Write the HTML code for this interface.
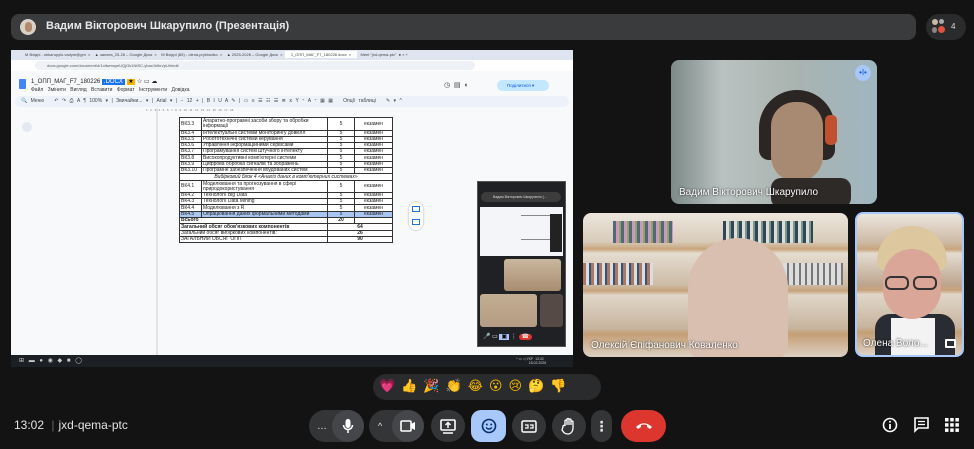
<!DOCTYPE html>
<html><head><meta charset="utf-8"><style>
*{margin:0;padding:0;box-sizing:border-box}
body{width:974px;height:449px;background:#131314;font-family:"Liberation Sans","DejaVu Sans",sans-serif;position:relative;overflow:hidden;color:#e3e3e3}
.abs{position:absolute}
.topbar{left:11px;top:14px;width:905px;height:26px;background:#3a3b3d;border-radius:8px}
.screen{left:11px;top:50px;width:562px;height:317px;background:#f8f9fb;overflow:hidden}
table{border-collapse:collapse;position:absolute;left:168px;top:67px;font-size:5px;color:#222;background:#fff}
td{border:0.8px solid #333;padding:0 1px;line-height:5px;white-space:nowrap;overflow:hidden}
.btn{position:absolute;top:410px;height:32px;background:#333537;border-radius:16px;display:flex;align-items:center;justify-content:center}
.tile{position:absolute;border-radius:8px;overflow:hidden}
.name{position:absolute;left:8px;bottom:6px;color:#fff;font-size:10px;text-shadow:0 0 2px #000}
</style></head><body>

<div class="abs topbar"></div>
<div class="abs" style="left:20px;top:19px;width:16px;height:16px;border-radius:50%;background:#d9d0c6"><div style="margin:3px auto 0;width:7px;height:10px;border-radius:4px;background:#b08a6a"></div></div>
<div class="abs" style="left:46px;top:20px;font-size:11px;font-weight:bold;color:#e8e8e8">Вадим Вікторович Шкарупило (Презентація)</div>
<div class="abs" style="left:926px;top:14px;width:40px;height:26px;background:#2a2b2d;border-radius:13px"></div>
<div class="abs" style="left:932px;top:19px;width:6px;height:6px;border-radius:50%;background:#c9b9a6"></div>
<div class="abs" style="left:939px;top:19px;width:5px;height:5px;border-radius:50%;background:#aaa"></div>
<div class="abs" style="left:932px;top:27px;width:5px;height:6px;border-radius:50%;background:#888"></div>
<div class="abs" style="left:938px;top:26px;width:7px;height:7px;border-radius:50%;background:#e0533c"></div>
<div class="abs" style="left:951px;top:22px;font-size:8px;color:#ddd">4</div>

<!-- shared screen -->
<div class="abs screen">
  <div class="abs" style="left:0;top:0;width:562px;height:10px;background:#dfe5f0"></div>
  <div class="abs" style="left:14px;top:2px;font-size:4px;color:#444;white-space:nowrap">M Вхідні - shkarupylo.vadym@gm &nbsp;×&nbsp; &nbsp; ▲ заочна_25-26 – Google Диск &nbsp;×&nbsp; &nbsp; M Вхідні (85) - olena.prykhodko &nbsp;×&nbsp; &nbsp; ▲ 2025-2026 – Google Диск &nbsp;×&nbsp; <span style="background:#fff;padding:1px 6px">1_ОПП_МАГ_F7_180226.docx &nbsp;×</span> &nbsp; Meet "jxd-qema-ptc" &nbsp;● × +</div>
  <div class="abs" style="left:0;top:10px;width:562px;height:11px;background:#fff"></div>
  <div class="abs" style="left:24px;top:11px;width:440px;height:9px;background:#eef1f6;border-radius:5px"></div>
  <div class="abs" style="left:36px;top:13px;font-size:4px;color:#555">docs.google.com/document/d/1oliwmuyeUQjGk1NtSC-ybac1hfkn/pUlr/edit</div>
  <div class="abs" style="left:8px;top:29px;width:7px;height:10px;background:#4285f4;border-radius:1px"></div>
  <div class="abs" style="left:20px;top:28px;font-size:6px;color:#222">1_ОПП_МАГ_F7_180226 <span style="background:#1a73e8;color:#fff;padding:0 2px">.DOCX</span> <span style="background:#f4b400;color:#000">&nbsp;★&nbsp;</span> ☆ ▭ ☁</div>
  <div class="abs" style="left:20px;top:37px;font-size:5px;color:#333;word-spacing:3px">Файл Змінити Вигляд Вставити Формат Інструменти Довідка</div>
  <div class="abs" style="left:486px;top:30px;width:52px;height:11px;background:#c2e7ff;border-radius:6px;font-size:4.5px;color:#0b57d0;padding:3px 0 0 10px">Поділитися ▾</div>
  <div class="abs" style="left:433px;top:31px;font-size:7px;color:#444">◷ &nbsp;▤ &nbsp;◐</div>
  <div class="abs" style="left:4px;top:46px;width:554px;height:11px;background:#edf2fa;border-radius:6px"></div>
  <div class="abs" style="left:10px;top:48px;font-size:5px;color:#444;white-space:nowrap;word-spacing:2px">🔍 Меню &nbsp; ↶ ↷ ⎙ A ¶ 100% ▾ | Звичайни... ▾ | Arial ▾ | − 12 + | B I U A ✎ | ▭ ≡ ☰ ☷ ☰ ≣ ⅹ Y ⁃ A ⁃ ▦ ▦ &nbsp; Опції таблиці &nbsp; ✎ ▾ ^</div>
  <div class="abs" style="left:145px;top:58px;width:2px;height:255px;background:#e3e3e3"></div>
  <div class="abs" style="left:11px;top:72px;width:10px;height:10px;border-radius:50%;background:#e3e8f2"></div>
  <div class="abs" style="left:135px;top:58px;width:260px;height:5px;font-size:3px;color:#777">1 . 2 . 3 . 4 . 5 . 6 . 7 . 8 . 9 . 10 . 11 . 12 . 13 . 14 . 15 . 16 . 17 . 18</div>
  <div class="abs" style="left:398px;top:152px;width:14px;height:28px;background:#fff;border-radius:7px;box-shadow:0 0 2px #aaa"></div>
  <div class="abs" style="left:401px;top:156px;width:8px;height:6px;border:1px solid #1a73e8"></div>
  <div class="abs" style="left:401px;top:169px;width:8px;height:6px;border:1px solid #1a73e8"></div>
  <!-- mini meet -->
  <div class="abs" style="left:466px;top:131px;width:89px;height:166px;background:#202124;border:1px solid #555"></div>
  <div class="abs" style="left:470px;top:142px;width:80px;height:10px;background:#3c3c3c;border-radius:5px;font-size:3.5px;color:#ddd;padding:3px 0 0 12px">Вадим Вікторович Шкарупило (...</div>
  <div class="abs" style="left:469px;top:157px;width:83px;height:49px;background:#f4f5f8"></div>
  <div class="abs" style="left:510px;top:165px;width:30px;height:25px;border:1px solid #888;border-width:1px 0"></div>
  <div class="abs" style="left:539px;top:164px;width:12px;height:38px;background:#222"></div>
  <div class="abs" style="left:493px;top:209px;width:57px;height:32px;background:linear-gradient(#c9b79f,#a88d70);border-radius:3px"></div>
  <div class="abs" style="left:469px;top:244px;width:57px;height:33px;background:linear-gradient(#c2ad92,#b59b84);border-radius:3px"></div>
  <div class="abs" style="left:529px;top:244px;width:23px;height:33px;background:#554a45;border-radius:3px"></div>
  <div class="abs" style="left:472px;top:283px;width:80px;height:12px;font-size:6px;color:#eee;white-space:nowrap">🎤 ▭ <span style="background:#a8c7fa;color:#000;padding:0 2px">▣</span> ⋮ <span style="background:#dc362e;padding:0 3px;border-radius:4px">☎</span></div>
  <!-- taskbar -->
  <div class="abs" style="left:0;top:305px;width:562px;height:12px;background:#1c1f24"></div>
  <div class="abs" style="left:8px;top:307px;font-size:6px;color:#ccc;word-spacing:3px">⊞ ▬ ● ◉ ◆ ■ ◯</div>
  <div class="abs" style="left:505px;top:307px;font-size:3.5px;color:#ccc">^ ▭ ◁ УКР &nbsp;13:02<br>&nbsp; &nbsp; &nbsp; &nbsp; &nbsp; &nbsp; &nbsp;18.02.2026</div>
  <table>
   <tr style="height:13px"><td style="width:22px">ВК3.3</td><td style="width:126px;white-space:normal">Апаратно-програмні засоби збору та обробки інформації</td><td style="width:27px;text-align:center">5</td><td style="width:38px;text-align:center">екзамен</td></tr>
   <tr style="height:6px"><td>ВК3.4</td><td>Інтелектуальні системи моніторингу довкілл</td><td align=center>5</td><td align=center>екзамен</td></tr>
   <tr style="height:6px"><td>ВК3.5</td><td>Робототехнічні системи керування</td><td align=center>5</td><td align=center>екзамен</td></tr>
   <tr style="height:6px"><td>ВК3.6</td><td>Управління інформаційними сервісами</td><td align=center>5</td><td align=center>екзамен</td></tr>
   <tr style="height:6px"><td>ВК3.7</td><td>Програмування систем штучного інтелекту</td><td align=center>5</td><td align=center>екзамен</td></tr>
   <tr style="height:7px"><td>ВК3.8</td><td>Високопродуктивні комп'ютерні системи</td><td align=center>5</td><td align=center>екзамен</td></tr>
   <tr style="height:6px"><td>ВК3.9</td><td>Цифрова обробка сигналів та зображень</td><td align=center>5</td><td align=center>екзамен</td></tr>
   <tr style="height:6px"><td>ВК3.10</td><td>Програмне забезпечення вбудованих систем</td><td align=center>5</td><td align=center>екзамен</td></tr>
   <tr style="height:7px"><td colspan=4 style="text-align:center;font-style:italic">Вибірковий блок 4 «Аналіз даних в комп'ютерних системах»</td></tr>
   <tr style="height:12px"><td>ВК4.1</td><td style="white-space:normal">Моделювання та прогнозування в сфері природокористування</td><td align=center>5</td><td align=center>екзамен</td></tr>
   <tr style="height:6px"><td>ВК4.2</td><td>Технології Big Data</td><td align=center>5</td><td align=center>екзамен</td></tr>
   <tr style="height:6px"><td>ВК4.3</td><td>Технології Data Mining</td><td align=center>5</td><td align=center>екзамен</td></tr>
   <tr style="height:7px"><td>ВК4.4</td><td>Моделювання з R</td><td align=center>5</td><td align=center>екзамен</td></tr>
   <tr style="height:6px;background:#a9c6f0"><td>ВК4.5</td><td>Опрацювання даних формальними методами</td><td align=center>5</td><td align=center>екзамен</td></tr>
   <tr style="height:6px"><td colspan=2><b>Всього</b></td><td align=center><b>20</b></td><td></td></tr>
   <tr style="height:7px"><td colspan=2><b>Загальний обсяг обов'язкових компонентів</b></td><td colspan=2 align=center><b>64</b></td></tr>
   <tr style="height:6px"><td colspan=2>Загальний обсяг вибіркових компонентів:</td><td colspan=2 align=center><b>26</b></td></tr>
   <tr style="height:6px"><td colspan=2>ЗАГАЛЬНИЙ ОБСЯГ ОПП</td><td colspan=2 align=center><b>90</b></td></tr>
  </table>
</div>

<!-- tiles -->
<div class="tile" style="left:671px;top:60px;width:206px;height:144px;background:linear-gradient(90deg,#7d8a88 0%,#b9c2c0 25%,#a9b3b0 60%,#9fb6c0 100%)">
  <div class="abs" style="left:88px;top:30px;width:76px;height:70px;border-radius:38px 38px 10px 10px;background:#2b2624"></div>
  <div class="abs" style="left:100px;top:42px;width:52px;height:80px;border-radius:24px 24px 26px 26px;background:#a88a72"></div>
  <div class="abs" style="left:154px;top:55px;width:12px;height:30px;border-radius:5px;background:#c0502f"></div>
  <div class="abs" style="left:100px;top:118px;width:80px;height:30px;background:#2e2a28;border-radius:10px"></div>
  <div class="abs" style="right:6px;top:5px;width:16px;height:16px;border-radius:50%;background:#a8c7fa;font-size:8px;color:#0b57d0;text-align:center;line-height:16px">•ǀ•</div>
  <div class="name">Вадим Вікторович Шкарупило</div>
</div>
<div class="tile" style="left:583px;top:213px;width:265px;height:144px;background:linear-gradient(#ece6dd 0%,#d8cbb9 20%,#c8a57c 25%,#e4dcd0 28%,#cdbba5 50%,#c6a27a 54%,#e0d6c8 57%,#c7b59e 80%,#c49f76 84%,#dbd0c2 100%)">
  <div class="abs" style="left:30px;top:8px;width:60px;height:22px;background:repeating-linear-gradient(90deg,#567 0 3px,#c9b 3px 6px,#8a6 6px 8px)"></div>
  <div class="abs" style="left:140px;top:8px;width:90px;height:22px;background:repeating-linear-gradient(90deg,#345 0 3px,#ddd 3px 6px,#798 6px 8px)"></div>
  <div class="abs" style="left:0;top:50px;width:70px;height:22px;background:repeating-linear-gradient(90deg,#a76 0 3px,#ddd 3px 6px,#357 6px 8px)"></div>
  <div class="abs" style="left:200px;top:50px;width:60px;height:22px;background:repeating-linear-gradient(90deg,#ddd 0 4px,#777 4px 6px)"></div>
  <div class="abs" style="left:105px;top:25px;width:100px;height:125px;border-radius:50px 50px 20px 20px;background:#d9bfb0"></div>
  <div class="name">Олексій Єпіфанович Коваленко</div>
</div>
<div class="tile" style="left:855px;top:212px;width:109px;height:145px;border:2px solid #a8c7fa;background:linear-gradient(#ece6dd 0%,#cdb9a4 20%,#c8a57c 25%,#e4dcd0 28%,#bda58f 50%,#c6a27a 54%,#e0d6c8 57%,#c7b59e 80%,#c49f76 84%,#dbd0c2 100%)">
  <div class="abs" style="left:18px;top:100px;width:80px;height:45px;background:#2a2c33;border-radius:15px 15px 0 0"></div>
  <div class="abs" style="left:34px;top:104px;width:44px;height:40px;background:#f3f3f3"></div>
  <div class="abs" style="left:20px;top:12px;width:70px;height:45px;border-radius:35px 35px 10px 10px;background:#dcc79e"></div>
  <div class="abs" style="left:26px;top:35px;width:58px;height:70px;border-radius:29px;background:#d9a697"></div>
  <div class="abs" style="left:28px;top:62px;width:24px;height:14px;border:2px solid #333;border-radius:6px"></div>
  <div class="abs" style="left:56px;top:62px;width:24px;height:14px;border:2px solid #333;border-radius:6px"></div>
  <div class="name" style="left:6px">Олена Воло...</div>
  <div class="abs" style="right:6px;bottom:7px;width:11px;height:9px;border:2px solid #fff;border-radius:1px"></div>
</div>

<!-- reactions -->
<div class="abs" style="left:373px;top:374px;width:228px;height:26px;background:#2a2b2d;border-radius:13px;font-size:13px;line-height:26px;padding-left:6px;letter-spacing:6px;font-family:'DejaVu Sans',sans-serif;white-space:nowrap"><span style="color:#ef6fa0">💗</span><span style="color:#f4b400">👍🎉👏😂😮😢🤔👎</span></div>

<!-- bottom -->
<div class="abs" style="left:14px;top:418px;font-size:12px;color:#e3e3e3">13:02 <span style="color:#666;margin:0 4px">|</span>jxd-qema-ptc</div>
<div class="btn" style="left:309px;width:55px;justify-content:flex-start;padding-left:8px;font-size:10px">…<div class="abs" style="right:0;top:0;width:32px;height:32px;border-radius:16px;background:#444649"></div><svg class="abs" style="right:10px;top:8px" width="12" height="16" viewBox="0 0 12 16"><rect x="3.5" y="1" width="5" height="9" rx="2.5" fill="#fff"/><path d="M1.5 7a4.5 4.5 0 009 0M6 11.5V15" stroke="#fff" stroke-width="1.5" fill="none"/></svg></div>
<div class="btn" style="left:369px;width:55px;justify-content:flex-start;padding-left:9px;font-size:9px">^<div class="abs" style="right:0;top:0;width:32px;height:32px;border-radius:16px;background:#444649"></div><svg class="abs" style="right:8px;top:10px" width="16" height="12" viewBox="0 0 16 12"><rect x="1" y="1" width="10" height="10" rx="1" stroke="#fff" stroke-width="1.6" fill="none"/><path d="M11 4l4-2v8l-4-2z" fill="#fff"/></svg></div>
<div class="btn" style="left:431px;width:34px"><svg width="16" height="15" viewBox="0 0 16 15"><rect x="1" y="1" width="14" height="10" rx="1" stroke="#fff" stroke-width="1.6" fill="none"/><path d="M8 9V4M5.5 6L8 3.5 10.5 6M3 14h10" stroke="#fff" stroke-width="1.5" fill="none"/></svg></div>
<div class="btn" style="left:471px;width:35px;background:#a8c7fa;border-radius:10px"><svg width="16" height="16" viewBox="0 0 16 16"><circle cx="8" cy="8" r="6.5" stroke="#062e6f" stroke-width="1.6" fill="none"/><circle cx="5.8" cy="6.5" r="1" fill="#062e6f"/><circle cx="10.2" cy="6.5" r="1" fill="#062e6f"/><path d="M5 9.5q3 3 6 0" stroke="#062e6f" stroke-width="1.4" fill="none"/></svg></div>
<div class="btn" style="left:512px;width:34px"><svg width="16" height="13" viewBox="0 0 16 13"><rect x="1" y="1" width="14" height="11" rx="1.5" stroke="#fff" stroke-width="1.5" fill="none"/><path d="M4 5h3v3H4M9 5h3v3H9" stroke="#fff" stroke-width="1.2" fill="none"/></svg></div>
<div class="btn" style="left:552px;width:34px"><svg width="16" height="18" viewBox="0 0 16 18"><path d="M4 9V4a1 1 0 012 0v4V2.5a1 1 0 012 0V8V3a1 1 0 012 0v5V5a1 1 0 012 0v6c0 3-2 6-5 6s-4-1-6-4L2 10a1 1 0 012-1z" stroke="#fff" stroke-width="1.3" fill="none"/></svg></div>
<div class="btn" style="left:591px;width:21px;font-size:14px;font-weight:bold">⋮</div>
<div class="btn" style="left:621px;width:45px;background:#dc362e"><svg width="18" height="8" viewBox="0 0 18 8"><path d="M1 5c5-5 11-5 16 0l-2 2-3-2V3c-2-.6-4-.6-6 0v2L3 7z" fill="#fff"/></svg></div>
<svg class="abs" style="left:882px;top:417px" width="16" height="16" viewBox="0 0 16 16"><circle cx="8" cy="8" r="6.5" stroke="#fff" stroke-width="1.6" fill="none"/><path d="M8 7v5" stroke="#fff" stroke-width="1.8"/><circle cx="8" cy="4.8" r="1" fill="#fff"/></svg>
<svg class="abs" style="left:914px;top:417px" width="15" height="16" viewBox="0 0 15 16"><path d="M1 1h13v10H4l-3 3z" stroke="#fff" stroke-width="1.6" fill="none"/><path d="M4 4.5h7M4 7.5h7" stroke="#fff" stroke-width="1.3"/></svg>
<svg class="abs" style="left:945px;top:418px" width="14" height="14" viewBox="0 0 14 14" fill="#fff"><rect x="0" y="0" width="3.5" height="3.5"/><rect x="5.2" y="0" width="3.5" height="3.5"/><rect x="10.4" y="0" width="3.5" height="3.5"/><rect x="0" y="5.2" width="3.5" height="3.5"/><rect x="5.2" y="5.2" width="3.5" height="3.5"/><rect x="10.4" y="5.2" width="3.5" height="3.5"/><rect x="0" y="10.4" width="3.5" height="3.5"/><rect x="5.2" y="10.4" width="3.5" height="3.5"/><rect x="10.4" y="10.4" width="3.5" height="3.5"/></svg>
</body></html>
